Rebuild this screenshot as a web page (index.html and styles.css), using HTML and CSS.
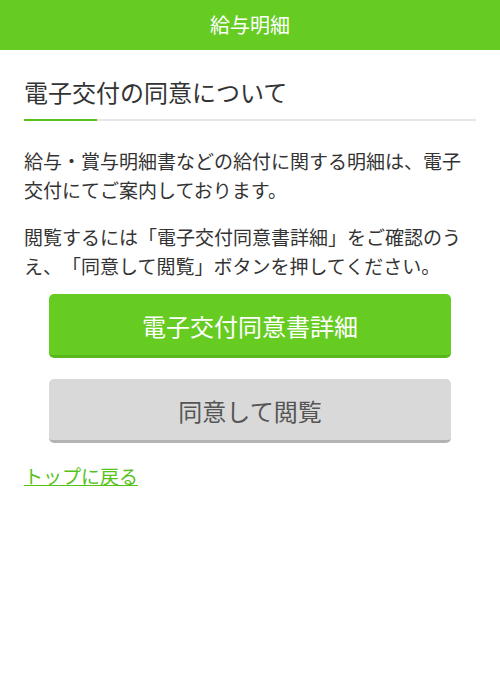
FILE: index.html
```html
<!DOCTYPE html>
<html lang="ja">
<head>
<meta charset="utf-8">
<title>給与明細</title>
<link rel="stylesheet" href="styles.css">
</head>
<body>
<header class="app-header">給与明細</header>
<main class="content">
  <h1 class="page-title">電子交付の同意について</h1>
  <p class="text first">給与・賞与明細書などの給付に関する明細は、電子交付にてご案内しております。</p>
  <p class="text">閲覧するには「電子交付同意書詳細」をご確認のうえ、「同意して閲覧」ボタンを押してください。</p>
  <div class="actions">
    <a class="btn btn-green" href="#">電子交付同意書詳細</a>
    <a class="btn btn-gray" href="#">同意して閲覧</a>
  </div>
  <a class="back-link" href="#">トップに戻る</a>
</main>
</body>
</html>
```
FILE: styles.css
```css
html, body {
  margin: 0;
  padding: 0;
  background: #ffffff;
}
body {
  font-family: "Noto Sans CJK JP", "Noto Sans", sans-serif;
  color: #333333;
  text-spacing-trim: space-all;
}
.app-header {
  height: 50px;
  line-height: 50px;
  background: #66cc22;
  color: #ffffff;
  font-size: 20px;
  text-align: center;
}
.content {
  padding: 0 24px;
}
.page-title {
  position: relative;
  margin: 24px 0 0;
  padding-bottom: 9px;
  font-size: 24px;
  line-height: 36px;
  font-weight: normal;
  color: #333333;
  border-bottom: 2px solid #e6e6e6;
}
.page-title::after {
  content: "";
  position: absolute;
  left: 0;
  bottom: -2px;
  width: 73px;
  height: 2px;
  background: #55c21b;
}
.text {
  margin: 19px 0 0;
  font-size: 19px;
  line-height: 28.5px;
}
.text.first {
  margin-top: 26px;
}
.actions {
  display: flex;
  flex-direction: column;
  align-items: center;
  gap: 21px;
  margin-top: 14px;
}
.btn {
  display: flex;
  align-items: center;
  justify-content: center;
  box-sizing: border-box;
  width: 402px;
  height: 64px;
  border-radius: 5px;
  font-size: 24px;
  text-decoration: none;
  padding-top: 2px;
}
.btn-green {
  background: #66cc22;
  color: #ffffff;
  border-bottom: 3px solid #56b81a;
}
.btn-gray {
  background: #d9d9d9;
  color: #555555;
  border-bottom: 3px solid #b3b3b3;
}
.back-link {
  display: inline-block;
  margin-top: 19px;
  font-size: 19px;
  line-height: 28.5px;
  color: #55c21b;
  text-decoration: underline;
}
```
